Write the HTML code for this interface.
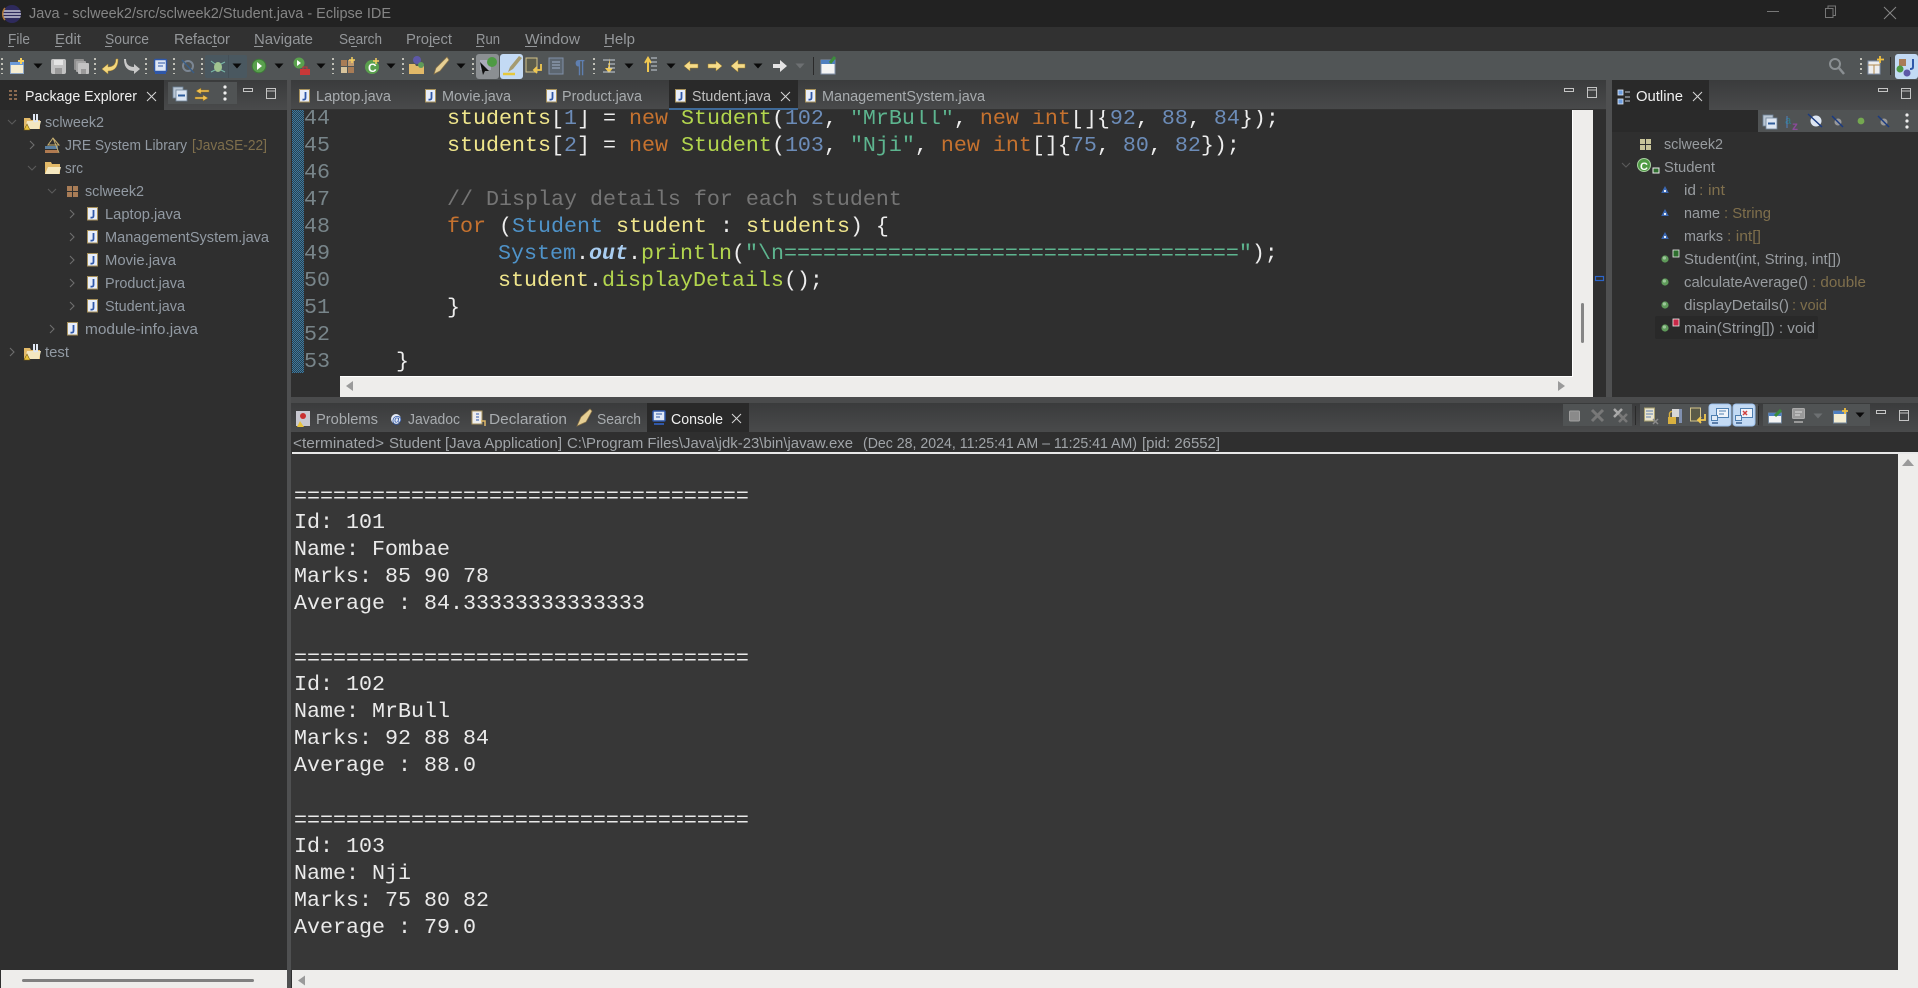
<!DOCTYPE html>
<html><head><meta charset="utf-8"><title>Java - sclweek2/src/sclweek2/Student.java - Eclipse IDE</title>
<style>
html,body{margin:0;padding:0;background:#2f2f2f;overflow:hidden}
svg{display:block}
text{font-family:"Liberation Sans",sans-serif;font-size:15px;white-space:pre}
.m text,text.m{font-family:"Liberation Mono",monospace;font-size:21.67px}
.menu{fill:#94979a}.tree{fill:#929aa3}.tan{fill:#7f6f4c}.out{fill:#989ca0}
.k{fill:#c6722f}.n{fill:#6c8cb8}.s{fill:#5db58f}.y{fill:#f0e68c}.g{fill:#b3d64e}.w{fill:#ededed}.b{fill:#4f93c9}
.ln{fill:#78858a}
</style></head><body>
<svg xmlns="http://www.w3.org/2000/svg" width="1918" height="988" viewBox="0 0 1918 988">
<defs>
<linearGradient id="tb" x1="0" y1="0" x2="0" y2="1"><stop offset="0" stop-color="#3a3b3c"/><stop offset="1" stop-color="#494a4b"/></linearGradient>
<pattern id="dith" width="2" height="2" patternUnits="userSpaceOnUse"><rect width="2" height="2" fill="#2c3e4a"/><rect width="1" height="1" fill="#3a7ba3"/><rect x="1" y="1" width="1" height="1" fill="#3a7ba3"/></pattern>
<symbol id="jf" overflow="visible"><rect x=".5" y=".5" width="10" height="12.5" fill="#e8eefa" stroke="#a8925c"/><path d="M6.5 3v6q0 2-3 1.5" fill="none" stroke="#2f57a8" stroke-width="1.8"/></symbol>
<symbol id="ar" overflow="visible"><path d="M-4.5 -2.5h9l-4.5 5z" fill="#0a0a0a"/></symbol>
<symbol id="cr" overflow="visible"><path d="M0 0l4 4-4 4" fill="none" stroke="#6d6d6d" stroke-width="1.1"/></symbol>
<symbol id="cd" overflow="visible"><path d="M0 0l4 4 4-4" fill="none" stroke="#5a5a5a" stroke-width="1.1"/></symbol>
<symbol id="proj" overflow="visible"><path d="M0 4h6l1 2h9v9H0z" fill="#e2b968"/><path d="M3 7h14l-2 8H1z" fill="#f3e6c0"/><path d="M10 0v6q0 2 3 1V0" fill="none" stroke="#dfe6f2" stroke-width="2"/><path d="M3 10l-3 6h6z" fill="#e8c33c" stroke="#7a5d10" stroke-width=".6"/></symbol>
<symbol id="dot" overflow="visible"><circle r="3.6" cx="0" cy="0" fill="#5f9a5a"/><circle r="1.6" cx="-.6" cy="-1" fill="#9cc79a"/></symbol>
<symbol id="tri" overflow="visible"><path d="M0 -4l3.8 7h-7.6z" fill="#3a67b2"/><circle cy="1" r="1.1" fill="#fff"/></symbol>
<symbol id="min" overflow="visible"><rect x=".5" y=".5" width="9" height="3" fill="none" stroke="#c4c4c4"/></symbol>
<symbol id="max" overflow="visible"><rect x=".5" y=".5" width="9" height="10" fill="none" stroke="#c4c4c4"/><path d="M.5 3h9" stroke="#c4c4c4"/></symbol>
<symbol id="x" overflow="visible"><path d="M0 0l9 9M9 0l-9 9" stroke="#d8d8d8" fill="none" stroke-width="1"/></symbol>
<symbol id="collapse" overflow="visible"><rect x="0" y="0" width="10" height="11" fill="#b9c6d4" stroke="#6f8398" stroke-width=".8"/><rect x="3" y="3" width="11" height="11" fill="#dde6f2" stroke="#6f8398" stroke-width=".8"/><path d="M5 8.5h7" stroke="#2e5c9a" stroke-width="2"/></symbol>
<symbol id="dots" overflow="visible"><circle cy="-6" r="1.6" fill="#eee"/><circle cy="0" r="1.6" fill="#eee"/><circle cy="6" r="1.6" fill="#eee"/></symbol>
<symbol id="sync" overflow="visible"><path d="M6 1l-5 3 5 3v-2h8V3H6zM8 8l5 3-5 3v-2H0v-2h8z" fill="#f0c050" stroke="#8a6a20" stroke-width=".5"/></symbol>
<clipPath id="edclip"><rect x="291" y="110" width="1281" height="266"/></clipPath>
<clipPath id="eclogo"><circle cx="12" cy="14" r="9"/></clipPath>
</defs>

<!-- backgrounds -->
<rect width="1918" height="988" fill="#2f2f2f"/>
<rect width="1918" height="27" fill="#222222"/>
<rect y="27" width="1918" height="24" fill="#313131"/>
<rect y="51" width="1918" height="29" fill="#515556"/>

<!-- title -->
<circle cx="12" cy="14" r="9" fill="#2e2a5c"/><g clip-path="url(#eclogo)"><path d="M3 11h18M3 14h18M3 17h18" stroke="#c8c8d8" stroke-width="1.500"/></g><path d="M5 8a9 9 0 0 0 0 12" fill="none" stroke="#b07a3c" stroke-width="1.500"/>
<text x="29" y="18" textLength="362" lengthAdjust="spacingAndGlyphs" fill="#858585">Java - sclweek2/src/sclweek2/Student.java - Eclipse IDE</text>
<path d="M1767 11.500h12" stroke="#777" stroke-width="1"/>
<path d="M1825.500 8.500h7.500v9h-7.500zM1828 8v-2h7.500v9.500h-2.500" fill="none" stroke="#777"/>
<path d="M1884 7l12 12M1896 7l-12 12" stroke="#888" stroke-width="1"/>

<!-- menu -->
<g class="menu">
<text x="8" y="44" textLength="22" lengthAdjust="spacingAndGlyphs">File</text>
<text x="55" y="44" textLength="26" lengthAdjust="spacingAndGlyphs">Edit</text>
<text x="105" y="44" textLength="44" lengthAdjust="spacingAndGlyphs">Source</text>
<text x="174" y="44" textLength="56" lengthAdjust="spacingAndGlyphs">Refactor</text>
<text x="254" y="44" textLength="59" lengthAdjust="spacingAndGlyphs">Navigate</text>
<text x="339" y="44" textLength="43" lengthAdjust="spacingAndGlyphs">Search</text>
<text x="406" y="44" textLength="46" lengthAdjust="spacingAndGlyphs">Project</text>
<text x="476" y="44" textLength="24" lengthAdjust="spacingAndGlyphs">Run</text>
<text x="525" y="44" textLength="55" lengthAdjust="spacingAndGlyphs">Window</text>
<text x="604" y="44" textLength="31" lengthAdjust="spacingAndGlyphs">Help</text>
</g>
<path d="M8 46.500h6M55 46.500h7M105 46.500h7M212 46.500h5M254 46.500h9M351 46.500h6M430 46.500h4M476 46.500h8M525 46.500h12M604 46.500h8" stroke="#94979a"/>

<!-- toolbar handles -->
<g stroke="#c0c0b8" stroke-width="2" stroke-dasharray="2 3">
<path d="M2 58v16M95 58v16M146 58v16M174 58v16M202 58v16M333 58v16M403 58v16M473 58v16M594 58v16M1861 58v16"/>
</g>
<!-- toolbar highlighted -->
<rect x="205" y="55" width="42" height="23" rx="2" fill="#4a5860"/>
<rect x="476" y="54" width="23" height="25" rx="3" fill="#8b8f92"/>
<rect x="500" y="54" width="23" height="25" rx="3" fill="#c3daf4"/>
<rect x="1895" y="54" width="23" height="25" rx="3" fill="#c3daf4"/>

<!-- toolbar icons -->
<rect x="10.500" y="62.500" width="13" height="11" fill="#f4edd2" stroke="#8fa8c8"/><rect x="10" y="62" width="14" height="3" fill="#6a9ad8"/><path d="M21 58v6M18 61h6" stroke="#f5d060" stroke-width="2"/>
<use href="#ar" x="38" y="66"/>
<rect x="51" y="59" width="15" height="15" rx="2" fill="#c2c2c2"/><rect x="54" y="60" width="9" height="5" fill="#e4e4e4"/><rect x="55" y="68" width="7" height="6" fill="#999"/>
<rect x="74" y="59" width="10" height="11" rx="1" fill="#8f8f8f"/><rect x="76" y="61" width="10" height="11" rx="1" fill="#a5a5a5"/><rect x="78" y="63" width="11" height="11" rx="1" fill="#c2c2c2"/><rect x="81" y="69" width="5" height="5" fill="#999"/>
<path d="M116 59q0 8-8 8v-3l-6 5 6 5v-3q10 0 10-12z" fill="#f3d77e" stroke="#b08a30" stroke-width=".5"/>
<path d="M126 59q0 8 8 8v-3l6 5-6 5v-3q-10 0-10-12z" fill="#c9c9c9"/>
<rect x="154.500" y="59.500" width="12" height="12" rx="1" fill="#dfe8f6" stroke="#2f57a8" stroke-width="1.500"/><path d="M158 63h7M158 66h5" stroke="#2f57a8"/><rect x="155" y="72" width="11" height="2" fill="#2f57a8"/>
<circle cx="188" cy="66" r="5" fill="none" stroke="#7c8794" stroke-width="2"/><path d="M182 60l12 13" stroke="#3a5d85" stroke-width="1.500"/>
<ellipse cx="218" cy="67" rx="4" ry="5" fill="#a0c490"/><path d="M211 61l4 3M225 62l-4 2M211 72l4-2M225 72l-4-2" stroke="#7ab8a8"/>
<rect x="228" y="55" width="1" height="23" fill="#455058"/>
<use href="#ar" x="237" y="66"/>
<circle cx="259" cy="66" r="6.800" fill="#5aa04e" stroke="#3d7a38"/><path d="M257 62l5 4-5 4z" fill="#fff"/>
<use href="#ar" x="279" y="66"/>
<circle cx="299" cy="63" r="5.500" fill="#5aa04e"/><path d="M297 60l4 3-4 3z" fill="#fff"/><rect x="300" y="69" width="10" height="6" fill="#c83838"/><path d="M303 69v-2h4v2" fill="none" stroke="#c83838"/>
<use href="#ar" x="321" y="66"/>
<rect x="341" y="60" width="6" height="6" fill="#a87c56"/><rect x="348" y="60" width="6" height="6" fill="#c09a70"/><rect x="341" y="67" width="6" height="6" fill="#d8c49c"/><rect x="348" y="67" width="6" height="6" fill="#a87c56"/><path d="M352 57v6M349 60h6" stroke="#f5d060" stroke-width="1.500"/>
<circle cx="372" cy="67" r="7" fill="#5aa04e"/><text x="368" y="72" font-weight="700" style="font-size:12px" fill="#fff">C</text><path d="M376 58v6M373 61h6" stroke="#f5d060" stroke-width="1.500"/>
<use href="#ar" x="391" y="66"/>
<path d="M409 64h6l1 2h8v8h-15z" fill="#e2b968"/><circle cx="417" cy="60" r="4" fill="#5d58a8"/><circle cx="421" cy="65" r="3" fill="#5f9a5a"/>
<path d="M447 57l2 3-9 11-6 3 2-6z" fill="#e6cf94" stroke="#8a7448" stroke-width=".7"/>
<use href="#ar" x="461" y="66"/>
<rect x="480" y="60" width="11" height="10" fill="#aab" /><path d="M480 62l9 9-4 0-2 4z" fill="#111"/><circle cx="492" cy="62" r="5" fill="#4e9a44"/>
<path d="M519 56l-9 11-2 5 5-3 9-11z" fill="#a59b70"/><path d="M503 74h12" stroke="#e6c83c" stroke-width="2.500"/>
<rect x="526" y="58" width="11" height="14" fill="#5d5d4c" stroke="#d4c48a"/><path d="M541 64v6h-7m3-3l-3 3 3 3" fill="none" stroke="#f0c850" stroke-width="1.800"/>
<rect x="549" y="58" width="14" height="16" fill="#5c6670" stroke="#8090a8"/><path d="M552 62h8M552 65h8M552 68h8" stroke="#a0b0c8"/>
<text x="575" y="73" style="font-size:18px" fill="#5f7fb0" font-weight="700">¶</text>
<path d="M608 72v-10h-3l4-5 4 5h-3" fill="#f0c850" transform="rotate(180 609 65)"/><path d="M603 60h12M608 64h7M608 68h7M603 72h12" stroke="#c8d0d8"/>
<use href="#ar" x="629" y="66"/>
<path d="M648 60v13m-3-4l3 5 3-5" stroke="#f0c850" stroke-width="2" fill="none" transform="rotate(180 648 66)"/><path d="M651 58h6M651 62h6M651 66h6M651 70h6" stroke="#c8d0d8"/>
<use href="#ar" x="671" y="66"/>
<path d="M684 66l6-5v3h8v4h-8v3z" fill="#f6dc8a" stroke="#a88428" stroke-width=".5"/>
<path d="M722 66l-6-5v3h-8v4h8v3z" fill="#f6dc8a" stroke="#a88428" stroke-width=".5"/>
<path d="M731 66l7-6v4h7v4h-7v4z" fill="#f6dc8a" stroke="#a88428" stroke-width=".5"/>
<use href="#ar" x="758" y="66"/>
<path d="M787 66l-7-6v4h-7v4h7v4z" fill="#e4e4e4"/>
<path d="M795.500 63.500h9l-4.500 5z" fill="#6d7072"/>
<path d="M813.500 57v18" stroke="#2a2a2a"/>
<rect x="821" y="60" width="14" height="14" fill="#f4f4f4" stroke="#8090a8"/><rect x="821" y="60" width="14" height="4" fill="#4f7fc0"/><path d="M830 63l5-6" stroke="#3c8c3c" stroke-width="3"/>
<!-- right toolbar -->
<circle cx="1835" cy="64" r="5" fill="none" stroke="#8a8f92" stroke-width="2"/><path d="M1839 68l5 6" stroke="#8a8f92" stroke-width="2.500"/>
<rect x="1868" y="61" width="12" height="13" fill="#eee" stroke="#8090a8"/><path d="M1868 65h12M1874 65v9" stroke="#b08a50"/><path d="M1880 56v7M1877 59.500h7" stroke="#f0c040" stroke-width="1.800"/>
<path d="M1890.500 57v18" stroke="#2a2a2a"/>
<rect x="1899" y="59" width="7" height="7" fill="#a87c56"/><circle cx="1900" cy="69" r="3.500" fill="#4e9a44"/><circle cx="1907" cy="73" r="3.500" fill="#5d58a8"/><path d="M1913 59v8q0 2-3 2" fill="none" stroke="#2f57a8" stroke-width="2"/>

<!-- left tab bar -->
<rect y="80" width="287" height="30" fill="url(#tb)"/>
<rect y="80" width="164" height="30" fill="#292929"/>
<g fill="#8a6a50"><rect x="9" y="90" width="3" height="2"/><rect x="9" y="94" width="3" height="2"/><rect x="9" y="98" width="3" height="2"/><rect x="14" y="90" width="3" height="2"/><rect x="14" y="94" width="3" height="2"/><rect x="14" y="98" width="3" height="2"/></g>
<text x="25" y="101" textLength="112" lengthAdjust="spacingAndGlyphs" fill="#f0f0f0">Package Explorer</text>
<use href="#x" x="147" y="92"/>
<rect x="168" y="82" width="69" height="22" fill="#505354"/>
<use href="#collapse" x="173" y="87"/>
<use href="#sync" x="195" y="87"/>
<use href="#dots" x="225" y="93"/>
<use href="#min" x="243" y="88"/>
<use href="#max" x="266" y="88"/>
<!-- sash vertical left -->
<rect x="287" y="80" width="4" height="908" fill="#4f5051"/>

<!-- package tree -->
<use href="#cd" x="8" y="120"/><use href="#proj" x="24" y="114"/>
<text x="45" y="127" textLength="59" lengthAdjust="spacingAndGlyphs" class="tree">sclweek2</text>
<use href="#cr" x="30" y="141"/>
<rect x="45" y="146" width="13" height="3" fill="#5a7fa0"/><rect x="45" y="150" width="13" height="3" fill="#b07a50"/><path d="M53 138l-5 7h11zM53 138l6 15" fill="none" stroke="#c8b070"/>
<text x="65" y="150" textLength="122" lengthAdjust="spacingAndGlyphs" class="tree">JRE System Library</text>
<text x="192" y="150" textLength="75" lengthAdjust="spacingAndGlyphs" class="tan">[JavaSE-22]</text>
<use href="#cd" x="28" y="166"/>
<path d="M45 162h6l1 2h8v10H45z" fill="#e2b968"/><path d="M48 167h13l-2 7H45z" fill="#f5e8c0"/>
<text x="65" y="173" textLength="18" lengthAdjust="spacingAndGlyphs" class="tree">src</text>
<use href="#cd" x="48" y="189"/>
<g fill="#a87c56"><rect x="67" y="186" width="5" height="5"/><rect x="73" y="186" width="5" height="5"/><rect x="67" y="192" width="5" height="5"/><rect x="73" y="192" width="5" height="5"/></g>
<text x="85" y="196" textLength="59" lengthAdjust="spacingAndGlyphs" class="tree">sclweek2</text>
<use href="#cr" x="70" y="210"/><use href="#jf" x="87" y="207"/><text x="105" y="219" textLength="76" lengthAdjust="spacingAndGlyphs" class="tree">Laptop.java</text>
<use href="#cr" x="70" y="233"/><use href="#jf" x="87" y="230"/><text x="105" y="242" textLength="164" lengthAdjust="spacingAndGlyphs" class="tree">ManagementSystem.java</text>
<use href="#cr" x="70" y="256"/><use href="#jf" x="87" y="253"/><text x="105" y="265" textLength="71" lengthAdjust="spacingAndGlyphs" class="tree">Movie.java</text>
<use href="#cr" x="70" y="279"/><use href="#jf" x="87" y="276"/><text x="105" y="288" textLength="80" lengthAdjust="spacingAndGlyphs" class="tree">Product.java</text>
<use href="#cr" x="70" y="302"/><use href="#jf" x="87" y="299"/><text x="105" y="311" textLength="80" lengthAdjust="spacingAndGlyphs" class="tree">Student.java</text>
<use href="#cr" x="50" y="325"/><use href="#jf" x="67" y="322"/><text x="85" y="334" textLength="113" lengthAdjust="spacingAndGlyphs" class="tree">module-info.java</text>
<use href="#cr" x="10" y="348"/><use href="#proj" x="24" y="344"/>
<text x="45" y="357" textLength="24" lengthAdjust="spacingAndGlyphs" class="tree">test</text>

<!-- left bottom scrollbar -->
<rect x="1" y="970" width="286" height="18" fill="#eeedeb"/>
<rect x="22" y="979" width="232" height="3" rx="1.500" fill="#808080"/>

<!-- editor tab bar -->
<rect x="291" y="80" width="1315" height="30" fill="url(#tb)"/>
<rect x="291" y="109" width="1315" height="1" fill="#333"/>
<rect x="669" y="80" width="129" height="30" fill="#292929"/>
<rect x="669" y="108" width="129" height="2" fill="#3f6a98"/>
<use href="#jf" x="299" y="89"/><text x="316" y="101" textLength="75" lengthAdjust="spacingAndGlyphs" fill="#a8acaf">Laptop.java</text>
<use href="#jf" x="425" y="89"/><text x="442" y="101" textLength="69" lengthAdjust="spacingAndGlyphs" fill="#a8acaf">Movie.java</text>
<use href="#jf" x="546" y="89"/><text x="562" y="101" textLength="80" lengthAdjust="spacingAndGlyphs" fill="#a8acaf">Product.java</text>
<use href="#jf" x="675" y="89"/><text x="692" y="101" textLength="79" lengthAdjust="spacingAndGlyphs" fill="#c0c0c0">Student.java</text>
<use href="#x" x="781" y="92"/>
<use href="#jf" x="805" y="89"/><text x="822" y="101" textLength="163" lengthAdjust="spacingAndGlyphs" fill="#a8acaf">ManagementSystem.java</text>
<use href="#min" x="1564" y="88"/>
<use href="#max" x="1587" y="87"/>

<!-- editor -->
<rect x="291" y="110" width="1315" height="287" fill="#2f2f2f"/>
<rect x="292" y="110" width="12" height="263" fill="url(#dith)"/>
<g clip-path="url(#edclip)" class="m">
<g class="ln">
<text x="304" y="124">44</text><text x="304" y="151">45</text><text x="304" y="178">46</text><text x="304" y="205">47</text><text x="304" y="232">48</text><text x="304" y="259">49</text><text x="304" y="286">50</text><text x="304" y="313">51</text><text x="304" y="340">52</text><text x="304" y="367">53</text>
</g>
<text x="447" y="124"><tspan class="y">students</tspan><tspan class="w">[</tspan><tspan class="n">1</tspan><tspan class="w">] = </tspan><tspan class="k">new</tspan><tspan class="w"> </tspan><tspan class="g">Student</tspan><tspan class="w">(</tspan><tspan class="n">102</tspan><tspan class="w">, </tspan><tspan class="s">"MrBull"</tspan><tspan class="w">, </tspan><tspan class="k">new</tspan><tspan class="w"> </tspan><tspan class="k">int</tspan><tspan class="w">[]{</tspan><tspan class="n">92</tspan><tspan class="w">, </tspan><tspan class="n">88</tspan><tspan class="w">, </tspan><tspan class="n">84</tspan><tspan class="w">});</tspan></text>
<text x="447" y="151"><tspan class="y">students</tspan><tspan class="w">[</tspan><tspan class="n">2</tspan><tspan class="w">] = </tspan><tspan class="k">new</tspan><tspan class="w"> </tspan><tspan class="g">Student</tspan><tspan class="w">(</tspan><tspan class="n">103</tspan><tspan class="w">, </tspan><tspan class="s">"Nji"</tspan><tspan class="w">, </tspan><tspan class="k">new</tspan><tspan class="w"> </tspan><tspan class="k">int</tspan><tspan class="w">[]{</tspan><tspan class="n">75</tspan><tspan class="w">, </tspan><tspan class="n">80</tspan><tspan class="w">, </tspan><tspan class="n">82</tspan><tspan class="w">});</tspan></text>
<text x="447" y="205" fill="#757575">// Display details for each student</text>
<text x="447" y="232"><tspan class="k">for</tspan><tspan class="w"> (</tspan><tspan class="b">Student</tspan><tspan class="w"> </tspan><tspan class="y">student</tspan><tspan class="w"> : </tspan><tspan class="y">students</tspan><tspan class="w">) {</tspan></text>
<text x="498" y="259"><tspan class="b">System</tspan><tspan class="w">.</tspan><tspan fill="#a9cdf0" font-style="italic" font-weight="700">out</tspan><tspan class="w">.</tspan><tspan class="g">println</tspan><tspan class="w">(</tspan><tspan class="s">"\n===================================</tspan><tspan class="s">"</tspan><tspan class="w">);</tspan></text>
<text x="498" y="286"><tspan class="y">student</tspan><tspan class="w">.</tspan><tspan class="g">displayDetails</tspan><tspan class="w">();</tspan></text>
<text x="447" y="313" class="w">}</text>
<text x="396" y="367" class="w">}</text>
</g>
<!-- editor scrollbars -->
<rect x="1572" y="110" width="21" height="287" fill="#eeedeb"/>
<rect x="340" y="376" width="1253" height="21" fill="#eeedeb"/>
<rect x="340" y="376" width="1232" height="1" fill="#fff"/><rect x="1572" y="110" width="1" height="267" fill="#fff"/>
<rect x="1581" y="303" width="3" height="40" rx="1.500" fill="#858585"/>
<path d="M346 386l7-5v10z" fill="#9a9a9a"/>
<path d="M1565 386l-7-5v10z" fill="#9a9a9a"/>
<rect x="1595.500" y="276.500" width="8" height="4" fill="none" stroke="#2c64c8" stroke-width="1.200"/>
<rect x="1606" y="80" width="6" height="317" fill="#4f5051"/>

<!-- outline -->
<rect x="1612" y="80" width="306" height="30" fill="url(#tb)"/>
<rect x="1612" y="80" width="97" height="30" fill="#292929"/>
<rect x="1618" y="90" width="5" height="5" fill="#6f9fe0" stroke="#dfe8f6" stroke-width=".8"/><rect x="1618" y="99" width="5" height="5" fill="#6f9fe0" stroke="#dfe8f6" stroke-width=".8"/><path d="M1625 92h5M1625 97h5M1625 101h5" stroke="#c0c8d4"/>
<text x="1636" y="101" textLength="47" lengthAdjust="spacingAndGlyphs" fill="#f0f0f0">Outline</text>
<use href="#x" x="1693" y="92"/>
<use href="#min" x="1878" y="88"/>
<use href="#max" x="1901" y="88"/>
<rect x="1612" y="110" width="306" height="287" fill="#2f2f2f"/>
<rect x="1612" y="110" width="146" height="22" fill="#2a2a2a"/>
<rect x="1758" y="110" width="160" height="22" fill="#505354"/>
<use href="#collapse" x="1763" y="115"/>
<text x="1785" y="124" style="font-size:11px" fill="#2f7f8a">a</text><text x="1792" y="130" style="font-size:12px" fill="#8a4a9a" font-weight="700">z</text><path d="M1787 116v12" stroke="#4f7fc0"/>
<circle cx="1816" cy="121" r="5.500" fill="#dde6f2"/><path d="M1808 114l14 13" stroke="#1a3a80" stroke-width="1.500"/>
<circle cx="1838" cy="122" r="3.500" fill="#999"/><path d="M1832 116l11 11" stroke="#1a3a80" stroke-width="1.500"/>
<circle cx="1861" cy="121" r="3.400" fill="#74a850"/>
<circle cx="1884" cy="122" r="3.500" fill="#999"/><path d="M1878 116l11 11" stroke="#1a3a80" stroke-width="1.500"/>
<use href="#dots" x="1907" y="121"/>
<rect x="1655" y="316" width="163" height="23" rx="2" fill="#292929"/>
<g fill="#c8c49a"><rect x="1640" y="139" width="5" height="5"/><rect x="1646" y="139" width="5" height="5"/><rect x="1640" y="145" width="5" height="5"/><rect x="1646" y="145" width="5" height="5"/></g>
<text x="1664" y="149" textLength="59" lengthAdjust="spacingAndGlyphs" class="out">sclweek2</text>
<use href="#cd" x="1622" y="163"/>
<circle cx="1644" cy="165" r="6.500" fill="#4e9a44" stroke="#a8d0a0"/><text x="1640" y="170" style="font-size:11px" font-weight="700" fill="#fff">C</text>
<rect x="1653" y="168" width="6" height="5" fill="#2e6e2e" stroke="#eee"/>
<text x="1664" y="172" textLength="51" lengthAdjust="spacingAndGlyphs" class="out">Student</text>
<use href="#tri" x="1665" y="190"/>
<text x="1684" y="195" textLength="12" lengthAdjust="spacingAndGlyphs" class="out">id</text><text x="1699" y="195" textLength="26" lengthAdjust="spacingAndGlyphs" class="tan">: int</text>
<use href="#tri" x="1665" y="213"/>
<text x="1684" y="218" textLength="36" lengthAdjust="spacingAndGlyphs" class="out">name</text><text x="1724" y="218" textLength="47" lengthAdjust="spacingAndGlyphs" class="tan">: String</text>
<use href="#tri" x="1665" y="236"/>
<text x="1684" y="241" textLength="39" lengthAdjust="spacingAndGlyphs" class="out">marks</text><text x="1727" y="241" textLength="34" lengthAdjust="spacingAndGlyphs" class="tan">: int[]</text>
<use href="#dot" x="1665" y="259"/><rect x="1673" y="250" width="6" height="7" fill="#2e6e2e" stroke="#eee" stroke-width=".8"/>
<text x="1684" y="264" textLength="157" lengthAdjust="spacingAndGlyphs" class="out">Student(int, String, int[])</text>
<use href="#dot" x="1665" y="282"/>
<text x="1684" y="287" textLength="124" lengthAdjust="spacingAndGlyphs" class="out">calculateAverage()</text><text x="1812" y="287" textLength="54" lengthAdjust="spacingAndGlyphs" class="tan">: double</text>
<use href="#dot" x="1665" y="305"/>
<text x="1684" y="310" textLength="105" lengthAdjust="spacingAndGlyphs" class="out">displayDetails()</text><text x="1792" y="310" textLength="35" lengthAdjust="spacingAndGlyphs" class="tan">: void</text>
<use href="#dot" x="1665" y="328"/><rect x="1673" y="319" width="6" height="7" fill="#c82848" stroke="#eee" stroke-width=".8"/>
<text x="1684" y="333" textLength="131" lengthAdjust="spacingAndGlyphs"><tspan class="out">main(String[]) : void</tspan></text>

<!-- bottom tab bar -->
<rect x="291" y="397" width="1627" height="6" fill="#4a4b4c"/>
<rect x="291" y="403" width="1627" height="29" fill="url(#tb)"/>
<rect x="647" y="403" width="102" height="29" fill="#292929"/>
<rect x="296" y="411" width="14" height="15" fill="#c8c8d0"/><circle cx="303" cy="416" r="3" fill="#c83030"/><path d="M300 421l-3 6h7z" fill="#e8c33c"/>
<text x="316" y="424" textLength="62" lengthAdjust="spacingAndGlyphs" fill="#a8acaf">Problems</text>
<circle cx="396" cy="419" r="5" fill="#e4eaf4"/><text x="392" y="423" style="font-size:10px" font-weight="700" fill="#2f57a8">@</text>
<text x="408" y="424" textLength="52" lengthAdjust="spacingAndGlyphs" fill="#a8acaf">Javadoc</text>
<rect x="472" y="411" width="10" height="13" fill="#eee" stroke="#a8925c"/><path d="M476 414h3M476 417h3M476 420h3" stroke="#2f57a8"/><path d="M481 421h4v5" stroke="#e2b968" stroke-width="1.500" fill="none"/>
<text x="489" y="424" textLength="78" lengthAdjust="spacingAndGlyphs" fill="#a8acaf">Declaration</text>
<path d="M592 411l-2-2-9 8-4 9 9-4z" fill="#e6cf94" stroke="#8a7448" stroke-width=".7"/>
<text x="597" y="424" textLength="44" lengthAdjust="spacingAndGlyphs" fill="#a8acaf">Search</text>
<rect x="653" y="411" width="12" height="10" rx="1" fill="#dfe8f6" stroke="#2f57a8" stroke-width="1.500"/><path d="M656 414h6M656 417h4" stroke="#2f57a8"/><rect x="654" y="423" width="10" height="2" fill="#2f57a8"/>
<text x="671" y="424" textLength="52" lengthAdjust="spacingAndGlyphs" fill="#f0f0f0">Console</text>
<use href="#x" x="732" y="414"/>
<!-- bottom toolbar -->
<rect x="1563" y="404" width="69" height="22" fill="#505354"/>
<rect x="1640" y="404" width="118" height="22" fill="#505354"/>
<rect x="1763" y="404" width="107" height="22" fill="#505354"/>
<rect x="1569.500" y="411" width="10" height="10" rx="1" fill="#8a8a8a" stroke="#a0a0a0"/>
<path d="M1592 410l11 11M1603 410l-11 11" stroke="#787878" stroke-width="3"/>
<path d="M1614 409l8 8M1622 409l-8 8" stroke="#a8a8a8" stroke-width="2.500"/><path d="M1619 414l8 8M1627 414l-8 8" stroke="#787878" stroke-width="2.500"/>
<path d="M1635.500 406v19" stroke="#2a2a2a"/><path d="M1758.500 406v19" stroke="#2a2a2a"/>
<rect x="1644.500" y="408" width="10" height="13" fill="#e8e4d0" stroke="#a8a070"/><path d="M1646 411h7M1646 414h7M1646 417h5" stroke="#6080b0"/><path d="M1653 419l5 5M1658 419l-5 5" stroke="#8a8a8a" stroke-width="1.500"/>
<rect x="1668" y="417" width="8" height="7" fill="#d8b040"/><path d="M1669.500 417v-3a2.500 2.500 0 0 1 5 0v3" fill="none" stroke="#d8b040" stroke-width="1.400"/><rect x="1672" y="409" width="10" height="8" fill="#d8d8d8"/><rect x="1679" y="409" width="3" height="14" fill="#8090b0"/>
<rect x="1690.500" y="408" width="10" height="13" fill="#5a5a48" stroke="#d4c48a"/><path d="M1705 414v6h-7m3-3l-3 3 3 3" fill="none" stroke="#f0c850" stroke-width="1.800"/>
<rect x="1709" y="404" width="22" height="22" rx="3" fill="#c3daf4" stroke="#9cc0ec"/>
<rect x="1733" y="404" width="22" height="22" rx="3" fill="#c3daf4" stroke="#9cc0ec"/>
<rect x="1716.500" y="408.500" width="12" height="9" fill="#f0f4fa" stroke="#4f7fb0"/><path d="M1719 411h7M1719 414h5" stroke="#4f7fb0"/><rect x="1711.500" y="415.500" width="6" height="5" fill="#e0eaf6" stroke="#4f7fb0"/><path d="M1712 423h6" stroke="#3a6090" stroke-width="1.500"/>
<rect x="1740.500" y="408.500" width="12" height="9" fill="#f0f4fa" stroke="#4f7fb0"/><path d="M1743 411l4 4M1747 411l-4 4" stroke="#d04040" stroke-width="1.500"/><rect x="1735.500" y="415.500" width="6" height="5" fill="#e0eaf6" stroke="#4f7fb0"/><path d="M1736 423h6" stroke="#3a6090" stroke-width="1.500"/>
<rect x="1768.500" y="413" width="13" height="10" fill="#f4f4f4" stroke="#6f8398"/><rect x="1768.500" y="413" width="13" height="3" fill="#4f7fc0"/><path d="M1775 416l6-6" stroke="#3c8c3c" stroke-width="3"/>
<rect x="1792.500" y="408.500" width="12" height="10" rx="1" fill="#999" stroke="#aaa"/><path d="M1795 412h7M1795 415h5" stroke="#ddd"/><path d="M1794 422h9" stroke="#999" stroke-width="2"/>
<path d="M1813.500 413.500h9l-4.500 5z" fill="#6d7072"/>
<rect x="1833.500" y="411" width="13" height="12" fill="#f4edd2" stroke="#6f8398"/><rect x="1833.500" y="411" width="13" height="3" fill="#4f7fc0"/><path d="M1845 408v6M1842 411h6" stroke="#f0c040" stroke-width="1.800"/>
<use href="#ar" x="1860" y="415"/>
<use href="#min" x="1876" y="410"/>
<use href="#max" x="1899" y="410"/>

<!-- info line -->
<rect x="291" y="432" width="1627" height="20" fill="#2f2f2f"/>
<g fill="#a0a4a8">
<text x="293" y="448" textLength="91" lengthAdjust="spacingAndGlyphs">&lt;terminated&gt;</text>
<text x="389" y="448" textLength="173" lengthAdjust="spacingAndGlyphs">Student [Java Application]</text>
<text x="567" y="448" textLength="286" lengthAdjust="spacingAndGlyphs">C:\Program Files\Java\jdk-23\bin\javaw.exe</text>
<text x="863" y="448" textLength="274" lengthAdjust="spacingAndGlyphs">(Dec 28, 2024, 11:25:41 AM – 11:25:41 AM)</text>
<text x="1142" y="448" textLength="78" lengthAdjust="spacingAndGlyphs">[pid: 26552]</text>
</g>
<rect x="292" y="452" width="1626" height="2" fill="#e8e8e8"/>

<!-- console -->
<rect x="291" y="454" width="1607" height="516" fill="#373737"/>
<g class="m" fill="#eaeaea">
<text x="294" y="502">===================================</text>
<text x="294" y="528">Id: 101</text>
<text x="294" y="555">Name: Fombae</text>
<text x="294" y="582">Marks: 85 90 78</text>
<text x="294" y="609">Average : 84.33333333333333</text>
<text x="294" y="664">===================================</text>
<text x="294" y="690">Id: 102</text>
<text x="294" y="717">Name: MrBull</text>
<text x="294" y="744">Marks: 92 88 84</text>
<text x="294" y="771">Average : 88.0</text>
<text x="294" y="826">===================================</text>
<text x="294" y="852">Id: 103</text>
<text x="294" y="879">Name: Nji</text>
<text x="294" y="906">Marks: 75 80 82</text>
<text x="294" y="933">Average : 79.0</text>
</g>
<rect x="1898" y="454" width="20" height="516" fill="#eeedeb"/>
<path d="M1908 459l6 7h-12z" fill="#9a9a9a"/>
<rect x="292" y="970" width="1626" height="18" fill="#eeedeb"/>
<path d="M298 980.500l7-5v10z" fill="#9a9a9a"/>
</svg>
</body></html>
